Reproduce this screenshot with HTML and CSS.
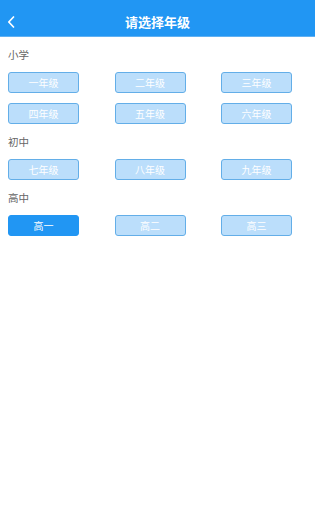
FILE: index.html
```html
<!DOCTYPE html>
<html lang="zh-CN">
<head>
    <meta charset="UTF-8">
    <meta name="viewport" content="width=device-width, initial-scale=1.0">
    <title>请选择年级</title>
    <link rel="stylesheet" href="styles.css">
</head>
<body>
    <div class="header">
        <span class="back">
            <svg width="8" height="12" viewBox="0 0 8 12"><path d="M6.5 1 L1.8 6 L6.5 11" fill="none" stroke="#fff" stroke-width="1.7" stroke-linecap="round" stroke-linejoin="round"/></svg>
        </span>
        <h1>请选择年级</h1>
    </div>

    <div class="section">
        <div class="section-title">小学</div>
        <div class="grades">
            <span class="grade">一年级</span>
            <span class="grade">二年级</span>
            <span class="grade">三年级</span>
            <span class="grade">四年级</span>
            <span class="grade">五年级</span>
            <span class="grade">六年级</span>
        </div>
    </div>

    <div class="section">
        <div class="section-title">初中</div>
        <div class="grades">
            <span class="grade">七年级</span>
            <span class="grade">八年级</span>
            <span class="grade">九年级</span>
        </div>
    </div>

    <div class="section">
        <div class="section-title">高中</div>
        <div class="grades">
            <span class="grade selected">高一</span>
            <span class="grade">高二</span>
            <span class="grade">高三</span>
        </div>
    </div>
</body>
</html>
```

FILE: styles.css
```css
body {
    margin: 0;
    font-family: "Noto Sans CJK SC", "Noto Sans", sans-serif;
    background-color: #fff;
    width: 315px;
}
.header {
    position: relative;
    height: 37px;
    padding-top: 7px;
    box-sizing: border-box;
    background-color: #2196f3;
    border-bottom: 1px solid #5fb0f2;
    display: flex;
    align-items: center;
    justify-content: center;
}
.header h1 {
    margin: 0;
    font-size: 13px;
    font-weight: bold;
    color: #fff;
    line-height: 16px;
}
.back {
    position: absolute;
    left: 7px;
    top: 16px;
    display: flex;
}
.section-title {
    padding: 11px 8px 10px;
    font-size: 10.5px;
    line-height: 14px;
    color: #666;
}
.grades {
    display: grid;
    grid-template-columns: repeat(3, 71px);
    column-gap: 35.5px;
    row-gap: 10px;
    padding-left: 8px;
}
.grade {
    height: 21px;
    box-sizing: border-box;
    border: 1px solid #63aee8;
    border-radius: 3px;
    background-color: #bbdefb;
    color: #fff;
    font-size: 10px;
    display: flex;
    align-items: center;
    justify-content: center;
}
.grade.selected {
    background-color: #2196f3;
    border-color: #2196f3;
}
```
